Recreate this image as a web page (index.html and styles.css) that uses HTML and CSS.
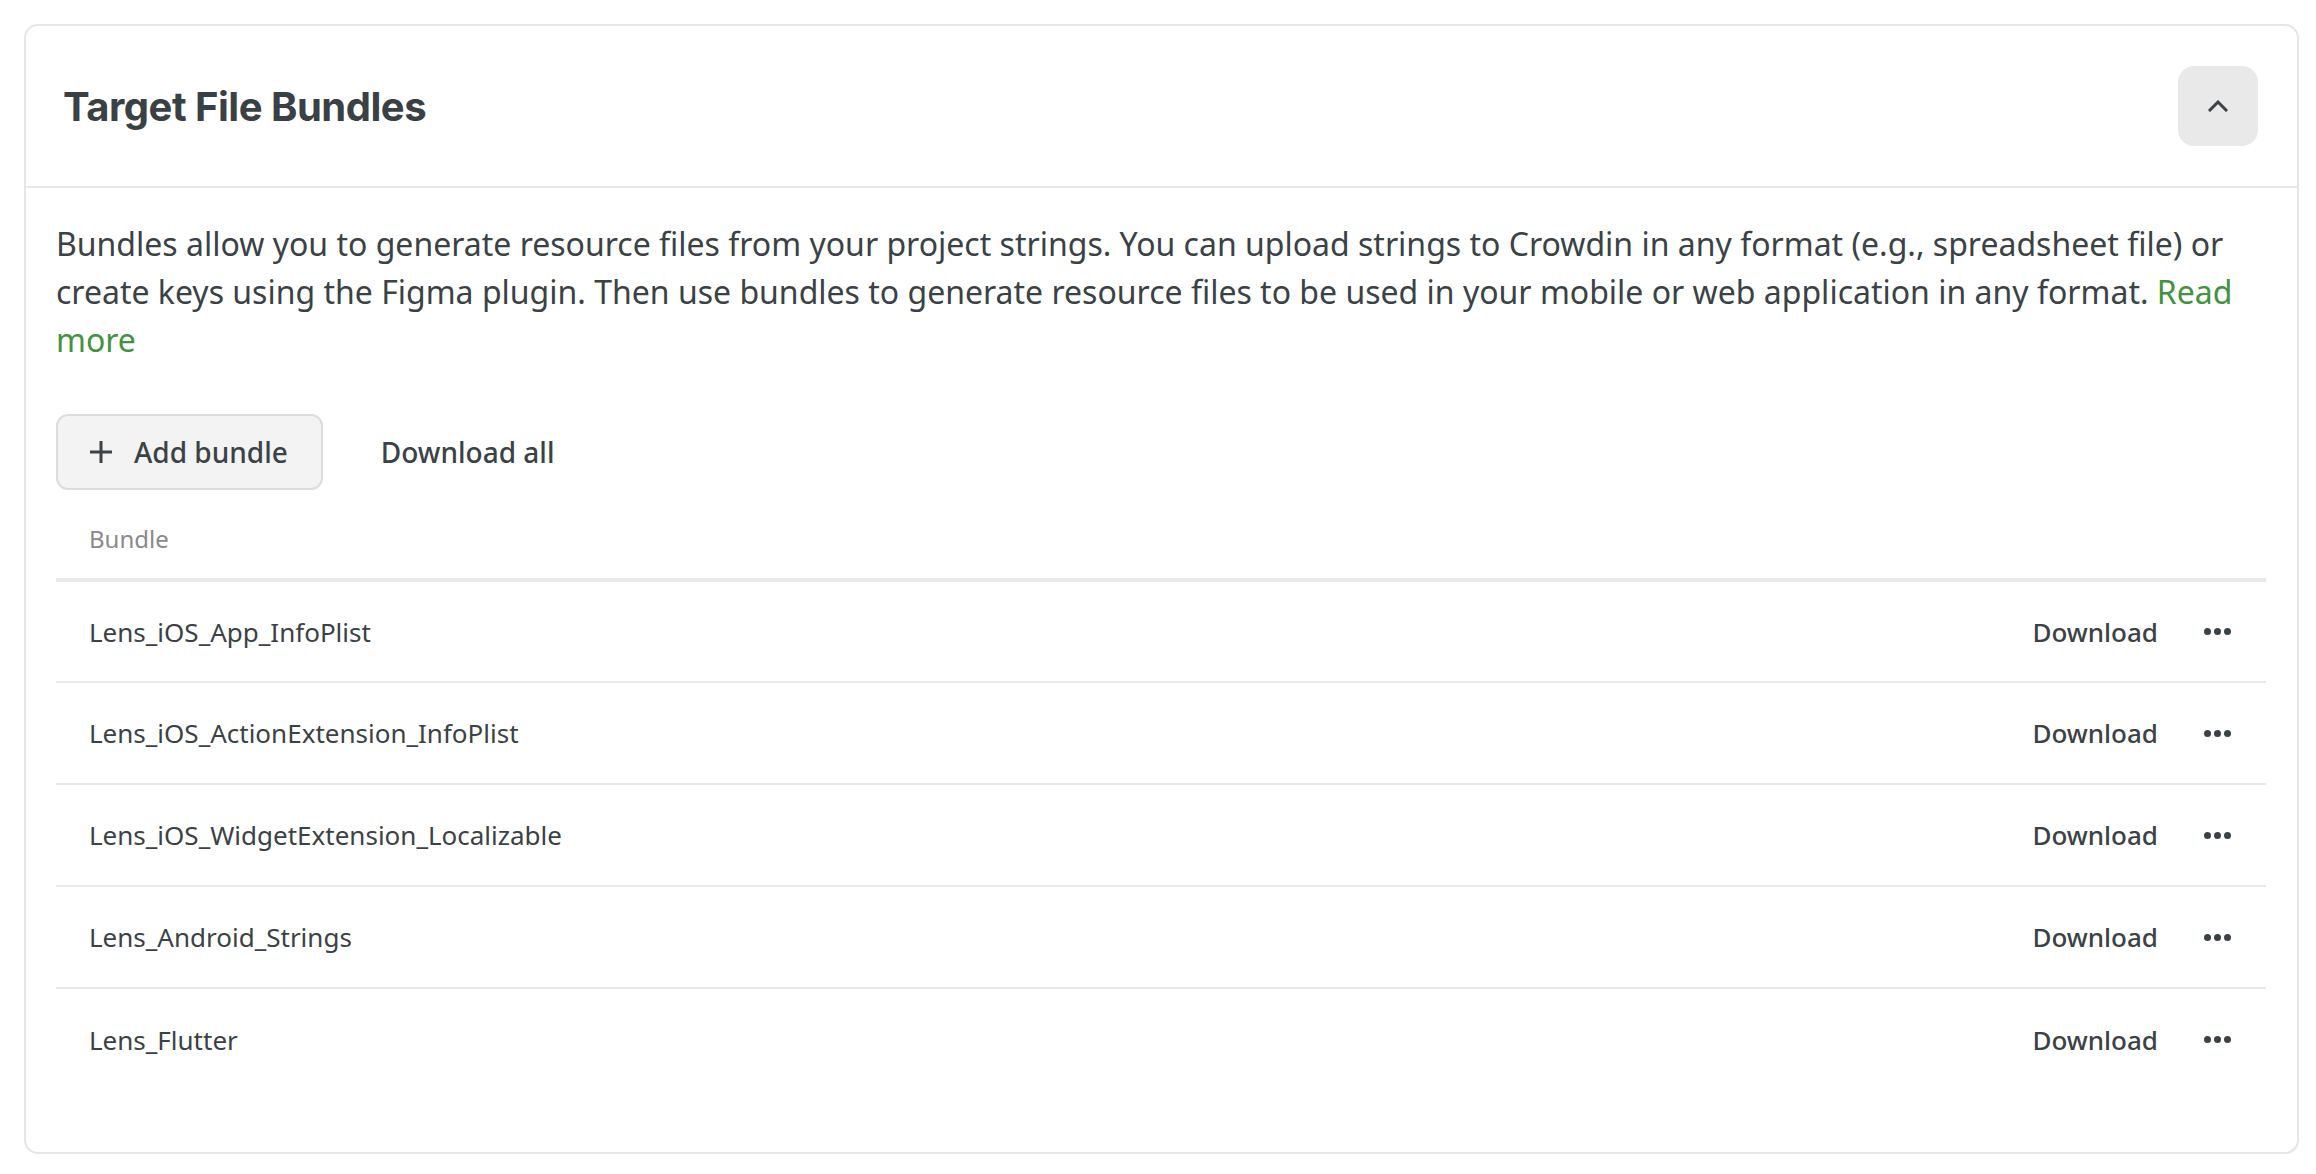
FILE: index.html
```html
<!DOCTYPE html>
<html lang="en">
<head>
<meta charset="utf-8">
<title>Target File Bundles</title>
<link rel="stylesheet" href="styles.css">
</head>
<body>
<section class="card">
  <header class="card-header">
    <h2 class="title">Target File Bundles</h2>
    <button class="collapse-btn" aria-label="Collapse">
      <svg width="20" height="12" viewBox="0 0 20 12"><path d="M2 10 L10 2 L18 10" fill="none" stroke="#3b4347" stroke-width="3" stroke-linecap="square"/></svg>
    </button>
  </header>
  <div class="card-body">
    <p class="desc">Bundles allow you to generate resource files from your project strings. You can upload strings to Crowdin in any format (e.g., spreadsheet file) or create keys using the Figma plugin. Then use bundles to generate resource files to be used in your mobile or web application in any format. <a href="#" class="link">Read more</a></p>
    <div class="toolbar">
      <button class="btn btn-secondary">
        <svg width="24" height="24" viewBox="0 0 24 24"><path d="M12 1 V23 M1 12 H23" stroke="#3b4347" stroke-width="3" fill="none"/></svg>
        <span>Add bundle</span>
      </button>
      <button class="btn btn-link">Download all</button>
    </div>
    <table class="bundles">
      <thead>
        <tr><th>Bundle</th><th class="col-actions"></th></tr>
      </thead>
      <tbody>
        <tr><td>Lens_iOS_App_InfoPlist</td><td class="col-actions"><div class="actions"><button class="dl">Download</button><button class="more" aria-label="More"><span></span><span></span><span></span></button></div></td></tr>
        <tr><td>Lens_iOS_ActionExtension_InfoPlist</td><td class="col-actions"><div class="actions"><button class="dl">Download</button><button class="more" aria-label="More"><span></span><span></span><span></span></button></div></td></tr>
        <tr><td>Lens_iOS_WidgetExtension_Localizable</td><td class="col-actions"><div class="actions"><button class="dl">Download</button><button class="more" aria-label="More"><span></span><span></span><span></span></button></div></td></tr>
        <tr><td>Lens_Android_Strings</td><td class="col-actions"><div class="actions"><button class="dl">Download</button><button class="more" aria-label="More"><span></span><span></span><span></span></button></div></td></tr>
        <tr><td>Lens_Flutter</td><td class="col-actions"><div class="actions"><button class="dl">Download</button><button class="more" aria-label="More"><span></span><span></span><span></span></button></div></td></tr>
      </tbody>
    </table>
  </div>
</section>
</body>
</html>
```
FILE: styles.css
```css
* { box-sizing: border-box; }

html, body {
  margin: 0;
  background: #ffffff;
}

body {
  font-family: "Noto Sans", "Open Sans", sans-serif;
  color: #3a4246;
}

.card {
  margin: 24px 17px 22px 24px;
  border: 2px solid #e6e6e6;
  border-radius: 14px;
  background: #fff;
}

.card-header {
  height: 162px;
  display: flex;
  align-items: center;
  justify-content: space-between;
  padding: 0 39px 0 37px;
  border-bottom: 2px solid #e8e8e8;
}

.title {
  margin: 0;
  font-family: Inter, "Noto Sans", sans-serif;
  font-weight: 700;
  font-size: 40px;
  letter-spacing: -0.5px;
  color: #394145;
}

.collapse-btn {
  width: 80px;
  height: 80px;
  border: none;
  border-radius: 16px;
  background: #e9e9e9;
  display: flex;
  align-items: center;
  justify-content: center;
  padding: 0;
}

.card-body {
  padding: 32px 31px 62px 30px;
}

.desc {
  margin: 0;
  font-size: 32px;
  line-height: 48px;
}

.link {
  color: #43933e;
  text-decoration: none;
}

.toolbar {
  margin-top: 50px;
  display: flex;
  align-items: center;
  gap: 24px;
}

.btn {
  font-family: "Noto Sans", sans-serif;
  font-size: 28px;
  font-weight: 500;
  color: #3a4246;
  height: 76px;
  display: inline-flex;
  align-items: center;
  cursor: pointer;
}

.btn-secondary {
  padding: 0 33px 0 31px;
  gap: 21px;
  border: 2px solid #dcdcdc;
  border-radius: 12px;
  background: #f3f3f3;
}

.btn-link {
  padding: 0 34px;
  border: none;
  background: transparent;
}

.bundles {
  width: 100%;
  border-collapse: collapse;
}

.bundles th {
  text-align: left;
  font-weight: 400;
  font-size: 24px;
  line-height: 34px;
  color: #8a8a8a;
  padding: 32px 33px 22px;
  border-bottom: 4px solid #e8e8e8;
}

.bundles td {
  height: 102px;
  padding: 0 33px;
  font-size: 26px;
  border-bottom: 2px solid #e8e8e8;
}

.bundles tbody tr:last-child td {
  border-bottom: none;
}

.bundles .col-actions {
  padding-right: 35px;
}

.actions {
  display: flex;
  justify-content: flex-end;
  align-items: center;
  gap: 46px;
}

.dl {
  border: none;
  background: transparent;
  padding: 0;
  font-family: "Noto Sans", sans-serif;
  font-size: 26px;
  font-weight: 500;
  color: #3a4246;
}

.more {
  border: none;
  background: transparent;
  padding: 0;
  display: flex;
  gap: 3px;
  align-items: center;
}

.more span {
  width: 7px;
  height: 7px;
  border-radius: 50%;
  background: #3a4246;
}
```
